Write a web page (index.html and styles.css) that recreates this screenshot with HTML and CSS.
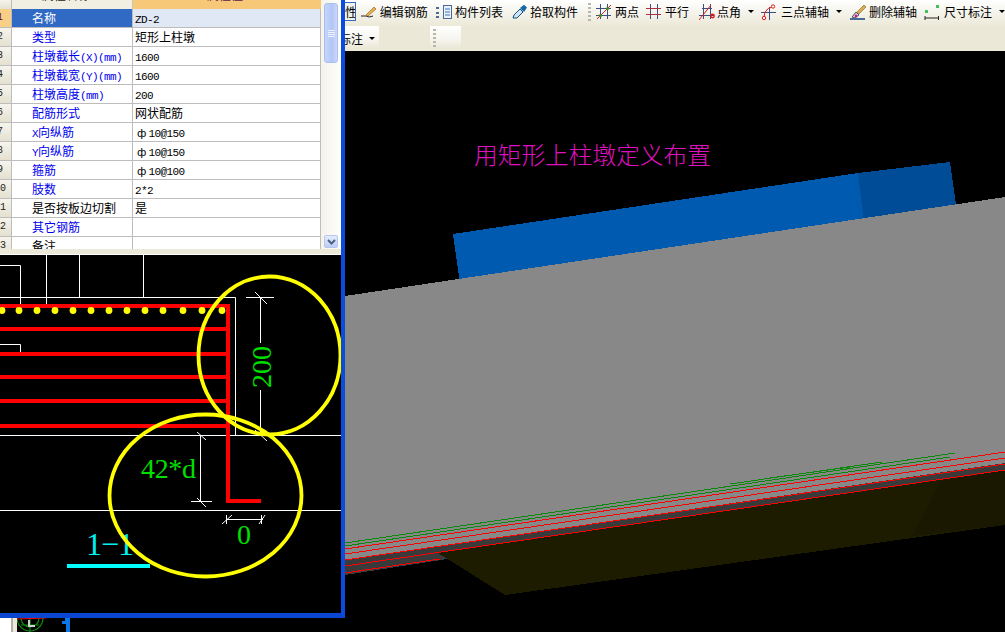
FILE: index.html
```html
<!DOCTYPE html>
<html lang="zh">
<head>
<meta charset="utf-8">
<title>矩形上柱墩</title>
<link rel="stylesheet" href="styles.css">
</head>
<body>
<div class="app">
  <div class="left">
    <div class="window">
      <div class="props">
        <div class="grid">
          <div class="row head"><div class="num"></div><div class="hname"><span>属性名称</span></div><div class="hval"><span>属性值</span></div></div>
          <div class="row sel"><div class="num"><span>1</span></div><div class="name">名称</div><div class="val"><span class="lat">ZD-2</span></div></div>
          <div class="row"><div class="num"><span>2</span></div><div class="name">类型</div><div class="val">矩形上柱墩</div></div>
          <div class="row"><div class="num"><span>3</span></div><div class="name">柱墩截长<span class="lat">(X)(mm)</span></div><div class="val"><span class="lat">1600</span></div></div>
          <div class="row"><div class="num"><span>4</span></div><div class="name">柱墩截宽<span class="lat">(Y)(mm)</span></div><div class="val"><span class="lat">1600</span></div></div>
          <div class="row"><div class="num"><span>5</span></div><div class="name">柱墩高度<span class="lat">(mm)</span></div><div class="val"><span class="lat">200</span></div></div>
          <div class="row"><div class="num"><span>6</span></div><div class="name">配筋形式</div><div class="val">网状配筋</div></div>
          <div class="row"><div class="num"><span>7</span></div><div class="name"><span class="lat">X</span>向纵筋</div><div class="val rebar"><span class="bar">ф</span><span class="lat">10@150</span></div></div>
          <div class="row"><div class="num"><span>8</span></div><div class="name"><span class="lat">Y</span>向纵筋</div><div class="val rebar"><span class="bar">ф</span><span class="lat">10@150</span></div></div>
          <div class="row"><div class="num"><span>9</span></div><div class="name">箍筋</div><div class="val rebar"><span class="bar">ф</span><span class="lat">10@100</span></div></div>
          <div class="row"><div class="num"><span>10</span></div><div class="name">肢数</div><div class="val"><span class="lat">2*2</span></div></div>
          <div class="row"><div class="num"><span>11</span></div><div class="name plain">是否按板边切割</div><div class="val">是</div></div>
          <div class="row"><div class="num"><span>12</span></div><div class="name">其它钢筋</div><div class="val"></div></div>
          <div class="row"><div class="num"><span>13</span></div><div class="name plain">备注</div><div class="val"></div></div>
        </div>
        <div class="scroll">
          <div class="thumb"><svg width="7" height="7" viewBox="0 0 7 7"><path d="M0 0.5H7M0 2.5H7M0 4.5H7M0 6.5H7" stroke="#eef3fd" stroke-width="1"/></svg></div>
          <div class="down"><svg width="9" height="6" viewBox="0 0 9 6"><path d="M1 1L4.5 4.5L8 1" fill="none" stroke="#4d6185" stroke-width="2"/></svg></div>
        </div>
      </div>
      <div class="split"></div>
      <div class="drawing">
        <svg class="cad" width="341" height="359" viewBox="0 255 341 359">
          <g class="wl">
            <path d="M0 265.5H20.5V307M46.5 255V306M79.5 255V297M143.5 255V297M0 297.5H235.5V435M0 344.5H20.5V354M0 435.5H341M0 510.5H341"/>
            <path d="M246 297.5H274M260.5 297.5V343M260.5 390V435M255 292L267 304M255 430L267 441"/>
            <path d="M200.5 435V501M197 432L206 440M191 501.5H212M197 498L206 507"/>
            <path d="M226 519.5H263M226.5 515V524M261.5 515V524M222 524L232 515M259 524L265 515"/>
          </g>
          <g class="rl">
            <path d="M0 306H230M228 306V503M228 501H261M0 329H226M0 354H226M0 377H226M0 401H226M0 426H226"/>
          </g>
          <g class="dots">
            <circle cx="2" cy="310.5" r="3.4"/><circle cx="19" cy="310.5" r="3.4"/><circle cx="37" cy="310.5" r="3.4"/><circle cx="55" cy="310.5" r="3.4"/><circle cx="73" cy="310.5" r="3.4"/><circle cx="91" cy="310.5" r="3.4"/><circle cx="109" cy="310.5" r="3.4"/><circle cx="127" cy="310.5" r="3.4"/><circle cx="145" cy="310.5" r="3.4"/><circle cx="163" cy="310.5" r="3.4"/><circle cx="183" cy="310.5" r="3.4"/><circle cx="202" cy="310.5" r="3.4"/><circle cx="222" cy="310.5" r="3.4"/>
          </g>
          <text class="dim" transform="translate(271 388) rotate(-90)">200</text>
          <text class="dim" x="141" y="478" textLength="55">42*d</text>
          <text class="dim" x="237" y="544">0</text>
          <text class="sec" x="86" y="555" textLength="48">1−1</text>
          <rect class="secbar" x="67" y="564" width="83" height="4"/>
          <g class="ring">
            <ellipse cx="269.5" cy="355.5" rx="71" ry="79"/>
            <ellipse cx="205.5" cy="495.5" rx="96" ry="81"/>
          </g>
        </svg>
      </div>
    </div>
    <div class="foot">
      <div class="footwhite"></div>
      <svg class="footart" width="60" height="14" viewBox="0 0 60 14">
        <path d="M0 0A13 13 0 0 0 26 0M4 0A9 9 0 0 0 22 0M13 0V14M4 7H22" fill="none" stroke="#0c8c0c" stroke-width="1.2"/>
        <path d="M0 1L29 0" stroke="#ff0000"/>
        <path d="M12 2V8H18" fill="none" stroke="#d0d0d0" stroke-width="2"/>
        <path d="M45 3H48V0H53V14H49V6H45Z" fill="#0a78e8"/>
      </svg>
    </div>
  </div>

  <div class="right">
    <div class="toolbar one">
      <div class="active">性</div>
      <div class="tool m5"><svg width="16" height="16" viewBox="0 0 16 16"><path d="M0 12H5Q8 14 12 12" fill="none" stroke="#222"/><path d="M5 11L13 3L15 5L7 12Z" fill="#e8b050" stroke="#a06820" stroke-width=".7"/></svg><span>编辑钢筋</span></div>
      <div class="tool m8"><svg width="16" height="16" viewBox="0 0 16 16"><path d="M0 3H3V5H0ZM0 8H3V10H0ZM0 12H3V14H0Z" fill="#4a6a9a"/><rect x="7.5" y="1.5" width="8" height="13" fill="#eaf1fb" stroke="#4a6a9a"/><path d="M9 5H14M9 8H14M9 11H14" stroke="#3a74c0"/></svg><span>构件列表</span></div>
      <div class="tool m9 tight"><svg width="16" height="16" viewBox="0 0 16 16"><path d="M1 14L2 11L8 5L11 8L5 14Z" fill="#cfe4f8" stroke="#14507a"/><path d="M8 4L12 0.8L15 3.5L12 8Z" fill="#1468a8"/></svg><span>拾取构件</span></div>
      <div class="grip m10"></div>
      <div class="tool m5"><svg width="16" height="16" viewBox="0 0 16 16"><path d="M0 4.5H15M0 11.5H15M4.5 0V15M11.5 0V15" stroke="#3d4f80"/><path d="M1 15L15 1" stroke="#e01818"/><circle cx="4.5" cy="11.5" r="1.6" fill="#3f8f20"/><circle cx="11.5" cy="4.5" r="1.6" fill="#3f8f20"/></svg><span>两点</span></div>
      <div class="tool m7"><svg width="16" height="16" viewBox="0 0 16 16"><path d="M4.5 0V15M11.5 0V15" stroke="#3d4f80"/><path d="M0 4.5H15M0 10.5H15" stroke="#b03040"/></svg><span>平行</span></div>
      <div class="tool m10 tight"><svg width="16" height="16" viewBox="0 0 16 16"><path d="M0 11.5H15M4.5 0V15M11.5 0V15M3 4.5H13" stroke="#3d4f80"/><path d="M0 16L12 1" stroke="#e01818"/><circle cx="13.5" cy="12" r="1.7" fill="none" stroke="#e01818" stroke-width="1.4"/></svg><span>点角</span></div>
      <div class="arrow"></div>
      <div class="tool m7 wide"><svg width="16" height="16" viewBox="0 0 16 16"><path d="M0 8.5H15M8.5 3V16" stroke="#3d4f80"/><path d="M3 14Q3 5 11 3" fill="none" stroke="#e01818"/><circle cx="3" cy="14" r="1.7" fill="#fff" stroke="#e01818"/><circle cx="12" cy="2.5" r="1.7" fill="#fff" stroke="#e01818"/></svg><span>三点辅轴</span></div>
      <div class="arrow"></div>
      <div class="tool m7 tight"><svg width="18" height="16" viewBox="0 0 18 16"><path d="M1 15H16" stroke="#4a6a9a" stroke-width="2"/><path d="M3 13L7 8L10 11L6 14Z" fill="#d8d0e8" stroke="#555"/><path d="M8 8L15 1L17 3L10 10Z" fill="#d8b050" stroke="#806020" stroke-width=".6"/><circle cx="7" cy="12" r="1.4" fill="#d02090"/></svg><span>删除辅轴</span></div>
      <div class="tool m7 wide"><svg width="16" height="16" viewBox="0 0 16 16"><rect x="1" y="6" width="3" height="3" fill="#40c060"/><rect x="12" y="1" width="3" height="3" fill="#40c060"/><path d="M1 12V16M14.5 12V16M1 14H15" stroke="#222"/></svg><span>尺寸标注</span></div>
      <div class="arrow"></div>
    </div>
    <div class="toolbar two">
      <div class="chunk first"><span class="clip">标注</span><div class="arrow small"></div></div>
      <div class="chunk empty"><div class="grip"></div></div>
    </div>
    <div class="scene">
      <svg class="model" width="660" height="581" viewBox="345 51 660 581">
        <polygon fill="#005ab0" points="453,234 858,173 864,224 460,284"/>
        <polygon fill="#004c96" points="858,173 950,162 957,212 864,224"/>
        <polygon fill="#3a3a3a" points="345,558 1005,463 1005,472 345,575"/>
        <polygon fill="#888888" points="345,296 1005,197 1005,463 345,560"/>
        <polygon fill="#1e1c00" points="438,553 1005,470 1005,525 505,595"/>
        <polygon fill="#1a1800" points="941,480 1005,470 1005,525 912,536"/>
        <g class="greenl">
          <path d="M345 543L955 453M345 546L950 457"/>
          <path d="M730 484L882 462M770 478L850 467" />
        </g>
        <g class="redl">
          <path d="M345 549L1005 452M345 554L1005 458M345 560L1005 464M345 566L1005 470M345 573L440 559"/>
        </g>
      </svg>
      <div class="caption">用矩形上柱墩定义布置</div>
    </div>
  </div>
</div>
</body>
</html>
```
FILE: styles.css
```css
* { box-sizing: border-box; }
html, body { margin: 0; padding: 0; height: 632px; overflow: hidden; background: #000; }
body { font-family: "Noto Sans CJK SC", "Liberation Sans", sans-serif; font-size: 12px; color: #000; }

.app { display: flex; width: 1005px; height: 632px; }
.left { width: 345px; flex: none; display: flex; flex-direction: column; }
.right { flex: 1; display: flex; flex-direction: column; min-width: 0; }

.window { height: 618px; flex: none; display: flex; flex-direction: column; background: #ece9d8; border-right: 4px solid #0a4ce0; border-bottom: 5px solid #0a46d0; box-shadow: inset -1px -1px 0 #c8c8c8; }

.props { display: flex; height: 249px; flex: none; background: #fff; overflow: hidden; }
.grid { width: 321px; flex: none; }
.row { display: grid; grid-template-columns: 12px 121px 188px; height: 19px; line-height: 18px; border-bottom: 1px solid #bdbdbd; overflow: hidden; }
.row.head { height: 9px; border-bottom: 0; }
.row > div { overflow: hidden; white-space: nowrap; }
.num { background: linear-gradient(#f6f4ec, #e4e1d0); border-right: 1px solid #bdbdbd; position: relative; font-family: "Liberation Mono", monospace; font-size: 10px; color: #222; }
.num span { display: block; width: 24px; margin-left: -12px; text-align: center; }
.name { padding-left: 20px; color: #0000f0; border-right: 1px solid #bdbdbd; }
.name.plain { color: #000; }
.val { padding-left: 2px; border-right: 1px solid #bdbdbd; }
.rebar { padding-left: 4px; }
.lat { font-family: "Liberation Mono", monospace; font-size: 11px; letter-spacing: -0.6px; }
.bar { font-family: "DejaVu Sans", sans-serif; font-size: 11px; margin-right: 2px; }

.hname, .hval { height: 9px; text-align: center; }
.hname { background: #f1efe2; border-right: 1px solid #c9c6b4; color: #222; padding-right: 12px; }
.hval { background: #f6c878; color: #5a1a50; padding-right: 4px; }
.hname span, .hval span { display: block; margin-top: -14px; }

.sel .num { background: #f8cf85; color: #5a1a50; }
.sel .name { background: #316ac5; color: #fff; }
.sel .val { background: #e0e8f5; }

.scroll { flex: 1; display: flex; flex-direction: column; justify-content: space-between; padding: 3px 3px 1px 3px; background: linear-gradient(90deg, #f5f3ea, #fefefb); }
.thumb { width: 14px; height: 60px; border: 1px solid #a9bdee; border-radius: 3px; background: linear-gradient(90deg, #c5d5fb, #b2c6f6 60%, #cdd9fb); display: flex; align-items: center; justify-content: center; }
.down { width: 14px; height: 13px; border: 1px solid #b4c5ee; border-radius: 2px; background: linear-gradient(#e4ecfd, #bccdf5); display: flex; align-items: center; justify-content: center; }

.split { height: 6px; flex: none; background: #ece9d8; border-bottom: 1px solid #fff; }
.drawing { flex: 1; background: #000; overflow: hidden; min-height: 0; }
.cad { display: block; }
.wl path { fill: none; stroke: #fff; stroke-width: 1; }
.rl path { fill: none; stroke: #ff0000; stroke-width: 4; }
.dots circle { fill: #ffff00; }
.ring ellipse { fill: none; stroke: #ffff00; stroke-width: 3.8; }
.dim { font-family: "Liberation Serif", serif; font-size: 28px; fill: #00e000; }
.sec { font-family: "Liberation Serif", serif; font-size: 32px; fill: #00f0f0; }
.secbar { fill: #00ffff; }

.foot { height: 14px; flex: none; display: flex; background: #000; }
.footwhite { width: 17px; flex: none; background: linear-gradient(90deg, #fff 11px, #b0b0b0 11px, #b0b0b0 13px, #ece9d8 13px); }
.footart { display: block; }

.toolbar { display: flex; align-items: center; flex: none; white-space: nowrap; overflow: hidden; }
.toolbar.one { height: 26px; background: linear-gradient(#ffffff, #f6f5ee 40%, #ece9d8); padding-bottom: 3px; }
.toolbar.two { height: 25px; background: #ebe8d8; align-items: flex-start; }
.active { width: 13px; height: 19px; line-height: 18px; overflow: hidden; border: 1px solid #3169c6; border-left: 0; background: #f4f2e8; }
.tool { display: flex; align-items: center; gap: 3px; flex: none; }
.tool svg { display: block; flex: none; }
.tool.tight { gap: 2px; }
.tool.wide { gap: 4px; }
.m5 { margin-left: 5px; }
.m7 { margin-left: 7px; }
.m8 { margin-left: 8px; }
.m9 { margin-left: 9px; }
.m10 { margin-left: 10px; }
.grip { width: 3px; height: 18px; flex: none; background: repeating-linear-gradient(#b9b7a8 0 2px, transparent 2px 4px); }
.arrow { width: 0; height: 0; margin-left: 7px; flex: none; border-left: 3px solid transparent; border-right: 3px solid transparent; border-top: 3px solid #000; }

.chunk { height: 22px; padding-top: 2px; display: flex; align-items: center; background: linear-gradient(#ffffff, #f6f5ef 60%, #ebe8d8); border-radius: 0 0 4px 4px; }
.chunk.first { width: 34px; }
.clip { width: 18px; overflow: hidden; direction: rtl; flex: none; }
.arrow.small { margin-left: 6px; }
.chunk.empty { width: 31px; margin-left: 51px; padding-left: 3px; }

.scene { flex: 1; position: relative; background: #000; overflow: hidden; min-height: 0; }
.model { position: absolute; left: 0; top: 0; display: block; }
.model .greenl path { fill: none; stroke: #0a8a0a; stroke-width: 1; shape-rendering: crispEdges; }
.model .redl path { fill: none; stroke: #ff0000; stroke-width: 1; shape-rendering: crispEdges; }
.model polygon { shape-rendering: crispEdges; }
.caption { position: absolute; left: 129px; top: 89px; font-size: 23.7px; font-weight: 300; line-height: 28px; color: #e010c0; white-space: nowrap; font-family: "Noto Sans CJK SC", sans-serif; }
```
